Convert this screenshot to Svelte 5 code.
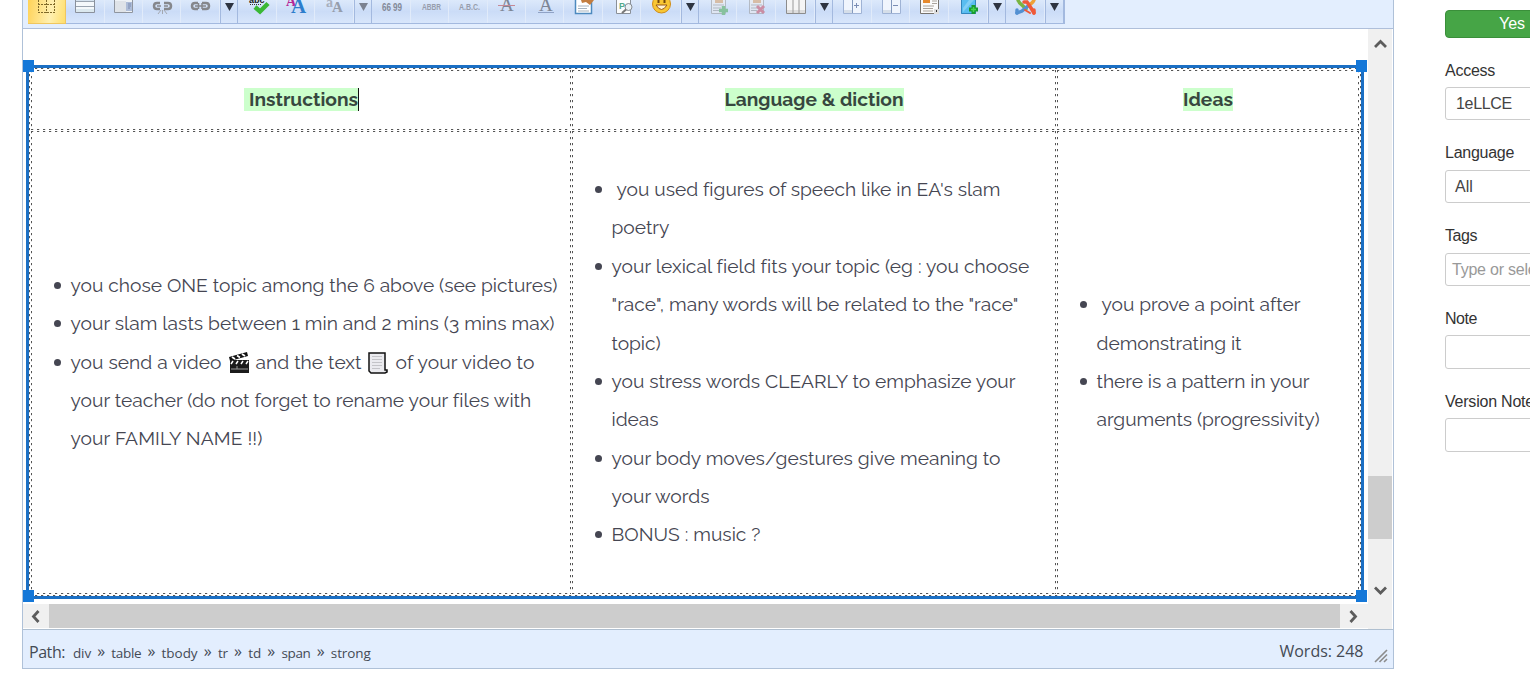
<!--
    Article editor: toolbar, editable table with a selection frame,
    status bar and the publishing options on the right
-->

<script>
    // toolbar buttons, w is the width of the cell
    const tools = [
        { icon: 'guides', w: 38, active: true },
        { icon: 'row', w: 39 },
        { icon: 'cell', w: 38 },
        { icon: 'unlink', w: 38 },
        { icon: 'link', w: 39 },
        { icon: 'arrow', w: 18 },
        { icon: 'spell', w: 39 },
        { icon: 'styles', w: 38 },
        { icon: 'attribs', w: 39 },
        { icon: 'arrow', w: 18, dim: true },
        { icon: 'cite', w: 39 },
        { icon: 'abbr', w: 38 },
        { icon: 'acronym', w: 39 },
        { icon: 'del', w: 38 },
        { icon: 'ins', w: 38 },
        { icon: 'props', w: 39 },
        { icon: 'search', w: 38 },
        { icon: 'smiley', w: 40 },
        { icon: 'arrow', w: 18 },
        { icon: 'addpage', w: 38 },
        { icon: 'delpage', w: 39 },
        { icon: 'columns', w: 39 },
        { icon: 'arrow', w: 18 },
        { icon: 'coladd', w: 39 },
        { icon: 'coldel', w: 38 },
        { icon: 'article', w: 39 },
        { icon: 'book', w: 39 },
        { icon: 'arrow', w: 18 },
        { icon: 'joomla', w: 39 },
        { icon: 'arrow', w: 19 }
    ];

    const instructions = [
        [['you chose ONE topic among the 6 above (see pictures)', 487]],
        [['your slam lasts between 1 min and 2 mins (3 mins max)', 484]]
    ];

    const diction = [
        [['you used figures of speech like in EA\'s slam', 383], ['poetry', 58]],
        [['your lexical field fits your topic (eg : you choose', 416], ['"race", many words will be related to the "race"', 407], ['topic)', 49]],
        [['you stress words CLEARLY to emphasize your', 404], ['ideas', 47]],
        [['your body moves/gestures give meaning to', 389], ['your words', 98]],
        [['BONUS : music ?', 149]]
    ];

    const ideas = [
        [['you prove a point after', 199], ['demonstrating it', 145]],
        [['there is a pattern in your', 213], ['arguments (progressivity)', 223]]
    ];

    const path = [['div', 18], ['table', 30], ['tbody', 36], ['tr', 10], ['td', 13], ['span', 29], ['strong', 40]];

    const fields = [
        { label: 'Access', w: 50, value: '1eLLCE', vw: 56, pad: 10 },
        { label: 'Language', w: 69, value: 'All', vw: 18, pad: 9 },
        { label: 'Tags', w: 32, value: 'Type or select some options', vw: 193, pad: 6, hint: true },
        { label: 'Note', w: 32, value: '' },
        { label: 'Version Note', w: 89, value: '' }
    ];

    // spreads the letters so that the text takes the given width
    function fit(node, width) {
        const natural = node.getBoundingClientRect().width;
        const space = (width - natural) / node.textContent.length;
        node.style.letterSpacing = space.toFixed(3) + 'px';
    }
</script>

{#snippet list(items, indent)}
    <ul>
        {#each items as lines, i}
            <li class:indent={indent && i === 0}>
                {#each lines as [text, width]}
                    <div><span use:fit={width}>{text}</span></div>
                {/each}
            </li>
        {/each}
    </ul>
{/snippet}

{#snippet icon(name)}
    {#if name === 'guides'}
        <path d="M10.5 0V13M18.5 0V13M26.5 0V13M10 4.5H27M10 12.5H27" stroke="#806a28" stroke-dasharray="2 1" fill="none" />
    {:else if name === 'row'}
        <path d="M9.5 0V12.5H28.5V0" fill="#f4f8fb" stroke="#8a919c" />
        <path d="M10 0H28V1H10Z" fill="#d5e2ee" />
        <path d="M10 1.5H28M10 6.500H28" stroke="#9aa4b0" />
        <path d="M10 9H28V12H10Z" fill="#dbe8ee" />
    {:else if name === 'cell'}
        <path d="M9.5 0V12.5H27.500V0" fill="#eef2f6" stroke="#8f959f" />
        <path d="M10 1H21V12H10Z" fill="#dfe3e8" />
        <path d="M21 2H27V11H21Z" fill="#aebdd8" />
        <path d="M23 4H26M23 6H26M23 8H25" stroke="#7a8bb0" />
    {:else if name === 'link' || name === 'unlink'}
        <g fill="none" stroke="#85878c" stroke-width="2.500">
            <path d="M17 3H14Q11 3 11 6Q11 9 14 9H17M21 3H25Q28 3 28 6Q28 9 25 9H21" />
            {#if name === 'link'}
                <path d="M14 6H25M17.500 3V9M21 3V9" stroke-width="1.500" />
            {:else}
                <path d="M14 6H18M21 6H25" stroke-width="1.500" />
                <path d="M18 10L15 14M19.500 10V14M21 10L24 14" stroke-width="1" stroke="#a4a8b0" />
            {/if}
        </g>
    {:else if name === 'arrow'}
        <path d="M5 3H14L9.500 11Z" fill="currentColor" />
    {:else if name === 'spell'}
        <text x="11" y="3" font-size="9" font-weight="bold" fill="#222">abc</text>
        <path d="M12 4.500H24" stroke="#333" stroke-dasharray="1 1" />
        <path d="M17 7L22 11.500L30 3.500" fill="none" stroke="#3ab835" stroke-width="4.500" />
    {:else if name === 'styles'}
        <text x="9" y="6" font-size="14" font-weight="bold" fill="#b52796" class="serif">A</text>
        <text x="14" y="13" font-size="21" font-weight="bold" fill="#2e7dcc" class="serif">A</text>
    {:else if name === 'attribs'}
        <text x="11" y="7" font-size="14" font-weight="bold" fill="#a7afbd" class="serif">a</text>
        <text x="17" y="12" font-size="15" font-weight="bold" fill="#959dab" class="serif">A</text>
    {:else if name === 'cite'}
        <text x="10" y="10.500" font-size="10" font-weight="bold" fill="#838997" textLength="9" lengthAdjust="spacingAndGlyphs">66</text>
        <text x="21" y="10.500" font-size="10" font-weight="bold" fill="#838997" textLength="9" lengthAdjust="spacingAndGlyphs">99</text>
    {:else if name === 'abbr'}
        <text x="11" y="10" font-size="8.500" font-weight="bold" fill="#979dac" textLength="19" lengthAdjust="spacingAndGlyphs">ABBR</text>
    {:else if name === 'acronym'}
        <text x="10" y="10" font-size="8.500" font-weight="bold" fill="#979dac" textLength="21" lengthAdjust="spacingAndGlyphs">A.B.C.</text>
    {:else if name === 'del'}
        <text x="12" y="11" font-size="19" fill="#7d8594" class="serif">A</text>
        <path d="M10 5.500H27" stroke="#c58996" />
    {:else if name === 'ins'}
        <text x="13" y="11" font-size="19" fill="#7d8594" class="serif">A</text>
        <path d="M12 12.500H28" stroke="#8fa2c6" />
    {:else if name === 'props'}
        <path d="M11.500 0V13.500H27.500V0" fill="#fff" stroke="#4d8abf" stroke-width="1.500" />
        <path d="M14 6H25M14 8.500H23M14 11H25" stroke="#a6b3bf" />
        <path d="M17 0H30L26 5L22 2L18 3Z" fill="#c37d3f" />
    {:else if name === 'search'}
        <path d="M13.500 0V13.500H27.500V0" fill="#fbfcfd" stroke="#8a9098" />
        <text x="16" y="9" font-size="9" font-weight="bold" fill="#52a989">P</text>
        <circle cx="25.500" cy="7" r="3.500" fill="#e9f0f5" stroke="#868b91" />
        <path d="M23 9.500L19 13" stroke="#777" stroke-width="2" />
    {:else if name === 'smiley'}
        <circle cx="20.500" cy="4" r="9" fill="#f8c632" stroke="#d08c17" />
        <path d="M17.500 0V3M23.500 0V3" stroke="#72470b" stroke-width="2" />
        <path d="M15 5Q20.500 14 26 5Z" fill="#fff3d0" stroke="#9a5915" />
    {:else if name === 'addpage' || name === 'delpage'}
        <g opacity=".55">
            <path d="M12.500 0V13.500H26.500V0" fill="#eee" stroke="#999" />
            <path d="M16 0H24V3H16Z" fill="#d59b62" />
            <path d="M14 5H25M14 8H22M14 10.500H20" stroke="#999" />
            {#if name === 'addpage'}
                <path d="M24.500 6V15M20 10.500H29" stroke="#4fac57" stroke-width="3.500" />
            {:else}
                <path d="M20 6L27 13M27 6L20 13" stroke="#c84d62" stroke-width="3" />
            {/if}
        </g>
    {:else if name === 'columns'}
        <path d="M10.500 0V13.500H29.500V0" fill="#f5f5f5" stroke="#8c8c8c" />
        <path d="M11 10H29V13H11Z" fill="#ddd" />
        <path d="M17 0V13M23 0V13" stroke="#999" />
    {:else if name === 'coladd' || name === 'coldel'}
        <path d="M10.500 0V13.500H28.500V0" fill="#f0f5fd" stroke="#9fb3d5" />
        <path d="M19.500 0V13" stroke="#8399bd" />
        <path d="M11 10H19V13H11Z" fill="#d5dee9" />
        <path d="M21 5.500H26" stroke="#7b8db4" />
        {#if name === 'coladd'}
            <path d="M23.500 3V8" stroke="#7b8db4" />
        {/if}
    {:else if name === 'article'}
        <path d="M10.500 0V13.500H28.500V0" fill="#fafafa" stroke="#77736d" />
        <path d="M13 0H20V3H13Z" fill="#e68a2e" />
        <path d="M22 1H27M22 3.500H27M13 6H24M13 8.500H23M13 11H23" stroke="#aaa49c" />
        <path d="M24 9H29V14H24Z" fill="#dedede" />
        <path d="M26.500 10V12" stroke="#333" />
    {:else if name === 'book'}
        <path d="M12 0H27V14H12Z" fill="#59bdf0" />
        <path d="M12.500 0V13.500H26.500V0" fill="none" stroke="#3386bd" />
        <path d="M14 8L20 0H25L14 12Z" fill="#82cef5" />
        <path d="M24.500 5V14M20 9.500H29" stroke="#199b2c" stroke-width="4" />
        <path d="M24.500 7V12M22 9.500H27" stroke="#44d34f" stroke-width="1.500" />
    {:else if name === 'joomla'}
        <g fill="none" stroke-width="3.500" stroke-linecap="round">
            <path d="M12 0Q13 3 16 5L20 9" stroke="#7ab441" />
            <path d="M28 0Q27 3 23 5" stroke="#eda13a" />
            <path d="M22 6L16 11L11 13" stroke="#5390d2" />
            <path d="M18 2L21 2L25 8L28 13" stroke="#ef5938" />
            <path d="M19 10L24 13" stroke="#ef5938" stroke-width="2" />
            <path d="M11 10V13" stroke="#5390d2" />
            <path d="M28 10V13" stroke="#ef5938" />
        </g>
    {/if}
{/snippet}

{#snippet chevron(d)}
    <svg class="chevron" viewBox="0 0 24 24"><path {d} fill="none" stroke="#5c5c5c" stroke-width="2.800" /></svg>
{/snippet}

<div class="page">
    <div class="editor">
        <div class="toolbar">
            <div class="tools">
                {#each tools as tool}
                    <div class="tool" class:active={tool.active} class:drop={tool.icon === 'arrow'} class:dim={tool.dim} style="width: {tool.w}px">
                        <svg width={tool.w} height="24" viewBox="0 0 {tool.w} 24">{@render icon(tool.icon)}</svg>
                    </div>
                {/each}
            </div>
        </div>

        <div class="middle">
            <div class="content">
                <div class="document">
                    <div class="frame">
                        <div class="table dashed">
                            <div class="cell head dashed"><mark class="first"><strong use:fit={109}>Instructions</strong><i class="caret"></i></mark></div>
                            <div class="cell head dashed"><mark><strong use:fit={179}>Language &amp; diction</strong></mark></div>
                            <div class="cell head dashed"><mark><strong use:fit={50}>Ideas</strong></mark></div>

                            <div class="cell dashed">
                                {@render list(instructions, false)}
                                <ul>
                                    <li>
                                        <div class="mixed">
                                            <span use:fit={151}>you send a video</span>
                                            <svg class="emoji clap" viewBox="0 0 20 22">
                                                <path d="M0 5L18 0L19 4L1 9Z" fill="#111" />
                                                <path d="M3 5L6 7M8 3.500L11 5.500M13 2L16 4" stroke="#fff" stroke-width="1.800" />
                                                <path d="M1 8H20V21H1Z" fill="#1b1b1b" />
                                                <path d="M4 9L2 12M9 9L7 12M14 9L12 12M19 9L17 12" stroke="#fff" stroke-width="1.500" />
                                                <path d="M2 17H19M8 14V17" stroke="#999" />
                                            </svg>
                                            <span use:fit={106}>and the text</span>
                                            <svg class="emoji sheet" viewBox="0 0 20 22">
                                                <path d="M1 1H17V18H19V20L17 21H3L1 19Z" fill="#ebebef" stroke="#111" stroke-width="1.500" />
                                                <path d="M4 4.500H14M4 7.500H14M4 10.500H14M4 13.500H14M4 16.500H12" stroke="#c4c4c8" />
                                            </svg>
                                            <span use:fit={139}>of your video to</span>
                                        </div>
                                        <div><span use:fit={460}>your teacher (do not forget to rename your files with</span></div>
                                        <div><span use:fit={192}>your FAMILY NAME !!)</span></div>
                                    </li>
                                </ul>
                            </div>
                            <div class="cell dashed">{@render list(diction, true)}</div>
                            <div class="cell dashed">{@render list(ideas, true)}</div>
                        </div>
                        <b class="handle nw"></b>
                        <b class="handle ne"></b>
                        <b class="handle sw"></b>
                        <b class="handle se"></b>
                    </div>
                </div>
                <div class="hscroll">
                    <div class="end">{@render chevron('M15.500 7L10.500 12.500L15.500 18')}</div>
                    <div class="hthumb"></div>
                    <div class="end">{@render chevron('M10.500 7L15.500 12.500L10.500 18')}</div>
                </div>
            </div>
            <div class="vscroll">
                <div class="up">{@render chevron('M7 18L12.500 12.500L18 18')}</div>
                <div class="vthumb"></div>
                <div class="down">{@render chevron('M7 9.500L12.500 15L18 9.500')}</div>
            </div>
        </div>

        <div class="status">
            <div class="path">
                <span class="title"><span use:fit={36}>Path:</span></span>
                {#each path as [name, width], i}
                    {#if i > 0}<span class="sep">»</span>{/if}
                    <span class="crumb" style="width: {width}px"><span use:fit={width}>{name}</span></span>
                {/each}
            </div>
            <div class="words"><span use:fit={84}>Words: 248</span></div>
            <svg class="grip" viewBox="0 0 14 14"><path d="M1 13L13 1M5.500 13L13 5.500M10 13L13 10" stroke="#8c8c8c" stroke-width="1.600" /></svg>
        </div>
    </div>

    <div class="sidebar">
        <div class="yes"><span use:fit={26}>Yes</span></div>
        {#each fields as field}
            <div class="field">
                <div class="label"><span use:fit={field.w}>{field.label}</span></div>
                <div class="input" class:hint={field.hint} style="padding-left: {field.pad || 0}px">
                    {#if field.value}<span use:fit={field.vw}>{field.value}</span>{/if}
                </div>
            </div>
        {/each}
    </div>
</div>

<style>
    :global(body) {
        overflow: hidden;
        background: #fff;
    }

    .page {
        display: flex;
        width: 1530px;
        height: 689px;
        overflow: hidden;
        box-sizing: border-box;
        padding-left: 22px;
        font-family: "Liberation Sans", sans-serif;
    }

    .page span, strong {
        white-space: nowrap;
    }

    /* editor box */
    .editor {
        width: 1370px;
        height: 668px;
        flex: none;
        border: 1px solid #afc1d8;
        border-top: none;
    }

    .toolbar {
        height: 28px;
        padding-left: 5px;
        background: #e3eefe;
        border-bottom: 1px solid #afbfda;
    }

    .tools {
        display: flex;
        width: 1036px;
        height: 24px;
        border-right: 1px solid #a3b9df;
    }

    .tool {
        height: 24px;
        flex: none;
        box-sizing: border-box;
        color: #2e3440;
        background: linear-gradient(#dce9fb, #cbdcf7 50%, #d8e6fb);
        border-bottom: 1px solid #a3b9df;
        box-shadow: inset -1px 0 #e1ebfa;
    }

    .tool svg {
        display: block;
        font-family: "Liberation Sans", sans-serif;
    }

    .tool .serif {
        font-family: "Liberation Serif", serif;
    }

    .active {
        background: linear-gradient(100deg, #ffd257, #fff0b0 60%, #ffdd66);
        box-shadow: inset -1px 0 #efc65f;
        border-bottom-color: #efc65f;
    }

    .drop {
        box-shadow: inset 1px 0 #a3b9df, inset -1px 0 #a3b9df;
    }

    .dim {
        color: #7b8290;
    }

    /* document and scrollbars */
    .middle {
        display: flex;
        height: 600px;
        border-bottom: 1px solid #afbfd0;
    }

    .content {
        width: 1345px;
    }

    .document {
        height: 575px;
        box-sizing: border-box;
        padding: 36px 0 0 3px;
    }

    .frame {
        position: relative;
        width: 1332px;
        height: 528px;
        border: 3px solid #1b6fc4;
    }

    .handle {
        position: absolute;
        width: 11px;
        height: 12px;
        background: #1477d8;
    }

    .nw { left: -6px; top: -8px; }
    .ne { right: -6px; top: -8px; }
    .sw { left: -6px; bottom: -6px; }
    .se { right: -6px; bottom: -6px; }

    /* guide lines, short dashes every 6px */
    .dashed {
        --h: repeating-linear-gradient(90deg, #555 0 2px, #ddd 2px 3px, transparent 3px 6px);
        --v: repeating-linear-gradient(#555 0 2px, #ddd 2px 3px, transparent 3px 6px);
        background: var(--h) top / 100% 1px, var(--h) bottom / 100% 1px, var(--v) left / 1px 100%, var(--v) right / 1px 100%;
        background-repeat: no-repeat;
    }

    .table {
        display: grid;
        grid-template-columns: 540px 484px 302px;
        grid-template-rows: 60px 463px;
        gap: 1px;
        padding: 2px;
        color: #454652;
        font-family: Raleway, Lato, sans-serif;
        font-size: 19.2px;
        font-weight: 400;
        line-height: 38.4px;
    }

    .cell {
        display: flex;
        flex-direction: column;
        justify-content: center;
        box-sizing: border-box;
        padding-bottom: 1.2px;
    }

    .head {
        align-items: center;
        padding-bottom: 1px;
        line-height: 23px;
    }

    mark {
        display: flex;
        height: 23px;
        color: #37473f;
        background: #cfc;
    }

    strong {
        font-weight: 700;
    }

    .first {
        padding-left: 5px;
    }

    .caret {
        width: 1px;
        margin-right: -1px;
        background: #111;
    }

    ul {
        margin: 0;
        padding: 0 0 0 39.5px;
        list-style: none;
    }

    li {
        position: relative;
    }

    li::before {
        content: "";
        position: absolute;
        left: -17px;
        top: 16px;
        width: 7px;
        height: 7px;
        border-radius: 50%;
        background: #454652;
    }

    .indent div:first-child {
        padding-left: 5px;
    }

    li div {
        height: 38.4px;
    }

    .mixed {
        display: flex;
    }

    .emoji {
        width: 20px;
        height: 22px;
        flex: none;
        margin-top: 9px;
    }

    .clap { margin-left: 7px; margin-right: 7px; }
    .sheet { margin-left: 6px; margin-right: 8px; }

    .hscroll {
        display: flex;
        height: 24px;
        background: #f0f0f0;
    }

    .end {
        width: 26px;
    }

    .hthumb {
        width: 1291px;
        background: #cdcdcd;
    }

    .chevron {
        display: block;
        width: 24px;
        height: 24px;
    }

    .vscroll {
        display: flex;
        flex-direction: column;
        width: 24px;
        height: 600px;
        background: #f0f0f0;
    }

    .up {
        height: 447px;
    }

    .vthumb {
        height: 63px;
        background: #cdcdcd;
    }

    .down {
        padding-top: 39px;
    }

    /* status bar */
    .status {
        display: flex;
        height: 38px;
        background: #e3eefe;
        color: #444a55;
        font-family: "Segoe UI", "Open Sans", sans-serif;
        font-size: 16px;
        line-height: 42px;
    }

    .path {
        display: flex;
        flex: 1;
        padding-left: 6px;
        font-size: 13.5px;
        line-height: 46px;
    }

    .title {
        width: 44px;
        font-size: 16px;
        line-height: 44px;
    }

    .sep {
        width: 20.3px;
        text-align: center;
        font-size: 16px;
        line-height: 43px;
    }

    .words {
        width: 94.5px;
    }

    .grip {
        width: 14px;
        height: 14px;
        margin: 19px 5px 0 0;
    }

    /* publishing options */
    .sidebar {
        width: 200px;
        flex: none;
        margin-left: 51px;
        padding-top: 10px;
        color: #333;
        font-size: 16px;
    }

    .yes {
        height: 28px;
        box-sizing: border-box;
        padding-left: 53px;
        border: 1px solid #3a8f3a;
        border-radius: 4px;
        background: #46a546;
        color: #fff;
        line-height: 26px;
    }

    .field {
        height: 82.8px;
    }

    .label {
        height: 49px;
        line-height: 65px;
    }

    .field:nth-child(3) .label, .field:nth-child(4) .label {
        line-height: 63.5px;
    }

    .input {
        height: 33.4px;
        box-sizing: border-box;
        border: 1px solid #ccc;
        border-radius: 3px;
        color: #444;
        line-height: 32px;
    }

    .hint {
        color: #999;
    }
</style>
